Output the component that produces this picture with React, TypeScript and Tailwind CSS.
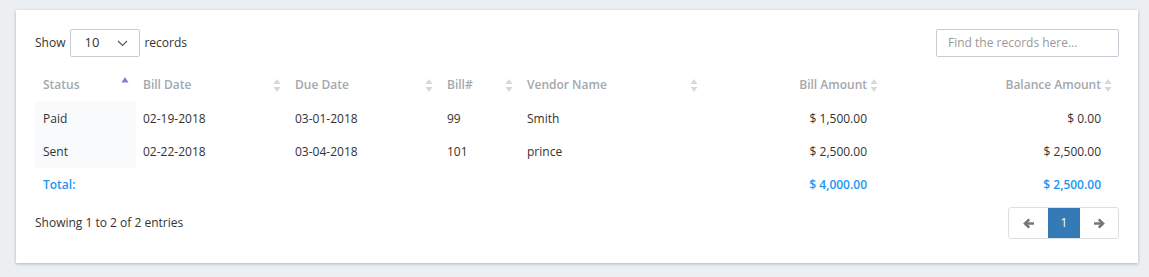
import React from 'react';

type Col = {
  key: string;
  label: string;
  width: string;
  align: 'left' | 'right';
};

const cols: Col[] = [
  { key: 'status', label: 'Status', width: 'w-[101px]', align: 'left' },
  { key: 'billDate', label: 'Bill Date', width: 'w-[152px]', align: 'left' },
  { key: 'dueDate', label: 'Due Date', width: 'w-[152px]', align: 'left' },
  { key: 'bill', label: 'Bill#', width: 'w-[80px]', align: 'left' },
  { key: 'vendor', label: 'Vendor Name', width: 'w-[185px]', align: 'left' },
  { key: 'amount', label: 'Bill Amount', width: 'w-[175px]', align: 'right' },
  { key: 'balance', label: 'Balance Amount', width: 'w-[238px]', align: 'right' },
];

const rows = [
  { status: 'Paid', billDate: '02-19-2018', dueDate: '03-01-2018', bill: '99', vendor: 'Smith', amount: '$ 1,500.00', balance: '$ 0.00' },
  { status: 'Sent', billDate: '02-22-2018', dueDate: '03-04-2018', bill: '101', vendor: 'prince', amount: '$ 2,500.00', balance: '$ 2,500.00' },
];

const SortBoth = () => (
  <svg width="8" height="15" viewBox="0 0 8 15" className="shrink-0">
    <path d="M4 1 L7.5 6 L0.5 6 Z" fill="#d6d9dc" />
    <path d="M4 14 L7.5 9 L0.5 9 Z" fill="#d6d9dc" />
  </svg>
);

const SortAsc = () => (
  <svg width="8" height="15" viewBox="0 0 8 15" className="shrink-0 -mt-[4px]">
    <path d="M4 1 L7.5 6.5 L0.5 6.5 Z" fill="#7b7fdc" />
  </svg>
);

export default function App() {
  return (
    <div
      className="w-[1149px] h-[277px] bg-[#eceff1] pt-[10px] pl-[16px]"
      style={{ fontFamily: '"Open Sans", "Liberation Sans", sans-serif' }}
    >
      <div className="w-[1122px] h-[253px] bg-white shadow-[0_1px_3px_rgba(0,0,0,0.25)] px-[19px] pt-[19px] text-[12px] text-[#333]">
        <div className="flex items-center justify-between">
          <div className="flex items-center gap-[4px]">
            <span>Show</span>
            <div className="w-[70px] h-[28px] border border-[#c8ccd4] rounded-[2px] flex items-center justify-between pl-[13px] pr-[11px] text-[13px] ml-[1px]">
              <span>10</span>
              <svg width="11" height="7" viewBox="0 0 11 7">
                <path d="M1 1 L5.5 5.5 L10 1" fill="none" stroke="#555" strokeWidth="1.1" />
              </svg>
            </div>
            <span>records</span>
          </div>
          <div className="w-[183px] h-[28px] border border-[#c8ccd4] rounded-[2px] flex items-center pl-[11px] text-[#999]">
            Find the records here...
          </div>
        </div>

        <table className="mt-[11px] border-collapse table-fixed w-[1083px]">
          <thead>
            <tr className="h-[34px]">
              {cols.map((c, i) => (
                <th key={c.key} className={`${c.width} font-semibold text-[#a3a8ad] p-0`}>
                  {c.align === 'left' ? (
                    <div className={`flex items-center justify-between pr-[7px] ${i === 0 ? 'pl-[8px]' : 'pl-[7px]'}`}>
                      <span>{c.label}</span>
                      {i === 0 ? <SortAsc /> : <SortBoth />}
                    </div>
                  ) : (
                    <div className={`flex items-center justify-end gap-[3px] ${c.key === 'amount' ? 'pr-[2px]' : 'pr-[6px]'}`}>
                      <span>{c.label}</span>
                      <SortBoth />
                    </div>
                  )}
                </th>
              ))}
            </tr>
          </thead>
          <tbody>
            {rows.map((r) => (
              <tr key={r.bill} className="h-[33px]">
                <td className="bg-[#f9fafc] pl-[8px]">{r.status}</td>
                <td className="pl-[7px]">{r.billDate}</td>
                <td className="pl-[7px]">{r.dueDate}</td>
                <td className="pl-[7px]">{r.bill}</td>
                <td className="pl-[7px]">{r.vendor}</td>
                <td className="text-right pr-[13px]">{r.amount}</td>
                <td className="text-right pr-[17px]">{r.balance}</td>
              </tr>
            ))}
            <tr className="h-[33px] text-[#2196f3] font-semibold">
              <td className="pl-[8px]">Total:</td>
              <td />
              <td />
              <td />
              <td />
              <td className="text-right pr-[13px]">$ 4,000.00</td>
              <td className="text-right pr-[17px]">$ 2,500.00</td>
            </tr>
          </tbody>
        </table>

        <div className="flex items-center justify-between mt-[6px]">
          <span>Showing 1 to 2 of 2 entries</span>
          <div className="flex h-[32px] border border-[#dde0e3] rounded-[3px] overflow-hidden">
            <div className="w-[39px] flex items-center justify-center">
              <svg width="12" height="11" viewBox="0 0 12 11">
                <path d="M11 5.5 H2.5 M6.2 1.3 L2 5.5 L6.2 9.7" fill="none" stroke="#777" strokeWidth="2.6" />
              </svg>
            </div>
            <div className="w-[32px] flex items-center justify-center bg-[#337ab7] text-white">1</div>
            <div className="w-[38px] flex items-center justify-center">
              <svg width="12" height="11" viewBox="0 0 12 11">
                <path d="M1 5.5 H9.5 M5.8 1.3 L10 5.5 L5.8 9.7" fill="none" stroke="#777" strokeWidth="2.6" />
              </svg>
            </div>
          </div>
        </div>
      </div>
    </div>
  );
}
